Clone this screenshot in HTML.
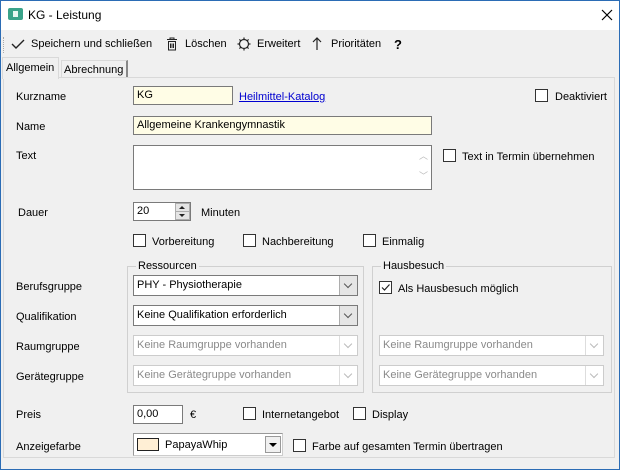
<!DOCTYPE html>
<html><head><meta charset="utf-8"><style>
*{box-sizing:border-box;margin:0;padding:0}
body{width:620px;height:470px;overflow:hidden;background:#f0f0f0;font-family:"Liberation Sans",sans-serif;font-size:11px;color:#000;position:relative}
.a{position:absolute;white-space:nowrap}
.t{line-height:15px}
.win{position:absolute;left:0;top:0;width:620px;height:470px;border:1px solid #2b6cb5}
.title{position:absolute;left:1px;top:1px;width:618px;height:29px;background:#fff}
.inp{position:absolute;border:1px solid #7a7a7a;background:#fff;padding:1px 0 0 3px;line-height:15px}
.y{background:#fffde6}
.cb{position:absolute;width:13px;height:13px;border:1px solid #333;background:#fff}
.cmb{position:absolute;border:1px solid #7a7a7a;background:#fff;height:21px;line-height:19px;padding-left:3px}
.cmb .b{position:absolute;right:0;top:0;width:18px;height:19px;border-left:1px solid #adadad;background:#e5e5e5}
.cmb .b:after{content:"";position:absolute;left:5px;top:5px;width:5px;height:5px;border-right:1px solid #555;border-bottom:1px solid #555;transform:rotate(45deg)}
.dis{border-color:#ccc;color:#8a8a8a;background:#fff}
.dis .b{background:#fff;border-left:1px solid #ddd}
.dis .b:after{border-color:#bbb}
.grp{position:absolute;border:1px solid #d0d0d0}
.grp span{position:absolute;top:-8px;left:8px;background:#f0f0f0;padding:0 2px;line-height:14px}
</style></head><body>
<div class="title"></div>
<div class="win"></div>
<div class="a" style="left:8px;top:8px;width:15px;height:12px;background:#3aa38a;border-radius:2px"><div style="position:absolute;left:5px;top:3px;width:5px;height:6px;background:#e8f7f2"></div></div>
<div class="a t" style="left:28px;top:8px;font-size:12px">KG - Leistung</div>
<svg class="a" style="left:601px;top:9px" width="12" height="12"><path d="M1 1L11 11M11 1L1 11" stroke="#000" stroke-width="1.2"/></svg>

<div class="a" style="left:3px;top:37px;height:16px;border-left:1px dotted #aaa"></div>
<svg class="a" style="left:11px;top:38px" width="14" height="12"><path d="M1 6 L5 10 L13 2" stroke="#222" stroke-width="1.4" fill="none"/></svg>
<div class="a t" style="left:31px;top:37px">Speichern und schließen</div>
<svg class="a" style="left:166px;top:37px" width="12" height="14"><path d="M1 2.5H11 M4 2.5V1H8V2.5 M2.5 4.5H9.5V13H2.5Z M4.5 6.5V11 M6 6.5V11 M7.5 6.5V11" stroke="#222" fill="none"/></svg>
<div class="a t" style="left:185px;top:37px">Löschen</div>
<svg class="a" style="left:237px;top:37px" width="14" height="14"><circle cx="7" cy="7" r="4.5" stroke="#222" fill="none" stroke-width="1.2"/><path d="M7 0.5V3 M7 11V13.5 M0.5 7H3 M11 7H13.5 M2.4 2.4L4 4 M10 10L11.6 11.6 M2.4 11.6L4 10 M10 4L11.6 2.4" stroke="#222" stroke-width="1.2"/></svg>
<div class="a t" style="left:257px;top:37px">Erweitert</div>
<svg class="a" style="left:312px;top:37px" width="10" height="14"><path d="M5 13V1 M1 5L5 1L9 5" stroke="#222" fill="none" stroke-width="1.2"/></svg>
<div class="a t" style="left:331px;top:37px">Prioritäten</div>
<div class="a t" style="left:394px;top:37px;font-weight:bold;font-size:13px">?</div>

<div class="a" style="left:3px;top:77px;width:612px;height:381px;border:1px solid #d9d9d9;background:#f0f0f0"></div>
<div class="a" style="left:2px;top:57px;width:57px;height:22px;border:1px solid #d9d9d9;border-bottom:none;background:#f0f0f0"></div>
<div class="a t" style="left:6px;top:61px">Allgemein</div>
<div class="a" style="left:61px;top:60px;width:67px;height:17px;border:1px solid #d9d9d9;border-bottom:none;border-right:2px solid #888"></div>
<div class="a t" style="left:64px;top:63px">Abrechnung</div>

<div class="a t" style="left:16px;top:90px">Kurzname</div>
<div class="inp y" style="left:133px;top:86px;width:100px;height:19px">KG</div>
<div class="a t" style="left:239px;top:90px;color:#0000d0;text-decoration:underline">Heilmittel-Katalog</div>
<div class="cb" style="left:535px;top:89px"></div>
<div class="a t" style="left:555px;top:90px">Deaktiviert</div>

<div class="a t" style="left:16px;top:120px">Name</div>
<div class="inp y" style="left:133px;top:116px;width:299px;height:19px">Allgemeine Krankengymnastik</div>

<div class="a t" style="left:16px;top:149px">Text</div>
<div class="inp" style="left:133px;top:145px;width:299px;height:45px"></div>
<div class="a" style="left:416px;top:146px;width:15px;height:43px;color:#bbb;font-size:9px;line-height:10px;text-align:center;padding-top:5px">︿<br><br>﹀</div>
<div class="cb" style="left:443px;top:149px"></div>
<div class="a t" style="left:462px;top:150px">Text in Termin übernehmen</div>

<div class="a t" style="left:18px;top:206px">Dauer</div>
<div class="inp" style="left:133px;top:202px;width:58px;height:19px">20</div>
<div class="a" style="left:175px;top:203px;width:15px;height:17px;background:#e5e5e5;border:1px solid #adadad"><div style="position:absolute;left:0;top:7px;width:13px;border-top:1px solid #adadad"></div><div style="position:absolute;left:3px;top:2px;border:3px solid transparent;border-bottom:3px solid #222;border-top:none"></div><div style="position:absolute;left:3px;top:10px;border:3px solid transparent;border-top:3px solid #222;border-bottom:none"></div></div>
<div class="a t" style="left:201px;top:206px">Minuten</div>

<div class="cb" style="left:133px;top:234px"></div><div class="a t" style="left:152px;top:235px">Vorbereitung</div>
<div class="cb" style="left:243px;top:234px"></div><div class="a t" style="left:262px;top:235px">Nachbereitung</div>
<div class="cb" style="left:363px;top:234px"></div><div class="a t" style="left:382px;top:235px">Einmalig</div>

<div class="grp" style="left:127px;top:266px;width:237px;height:127px"><span>Ressourcen</span></div>
<div class="grp" style="left:372px;top:266px;width:240px;height:127px"><span>Hausbesuch</span></div>

<div class="a t" style="left:16px;top:280px">Berufsgruppe</div>
<div class="a t" style="left:16px;top:310px">Qualifikation</div>
<div class="a t" style="left:16px;top:340px">Raumgruppe</div>
<div class="a t" style="left:16px;top:370px">Gerätegruppe</div>

<div class="cmb" style="left:133px;top:275px;width:225px">PHY - Physiotherapie<div class="b"></div></div>
<div class="cmb" style="left:133px;top:305px;width:225px">Keine Qualifikation erforderlich<div class="b"></div></div>
<div class="cmb dis" style="left:133px;top:335px;width:225px">Keine Raumgruppe vorhanden<div class="b"></div></div>
<div class="cmb dis" style="left:133px;top:365px;width:225px">Keine Gerätegruppe vorhanden<div class="b"></div></div>

<div class="cb" style="left:379px;top:281px"></div>
<svg class="a" style="left:380px;top:282px" width="11" height="11"><path d="M2 5.5L4.5 8L9.5 2.5" stroke="#222" stroke-width="1.2" fill="none"/></svg>
<div class="a t" style="left:398px;top:282px">Als Hausbesuch möglich</div>
<div class="cmb dis" style="left:379px;top:335px;width:225px">Keine Raumgruppe vorhanden<div class="b"></div></div>
<div class="cmb dis" style="left:379px;top:365px;width:225px">Keine Gerätegruppe vorhanden<div class="b"></div></div>

<div class="a t" style="left:16px;top:408px">Preis</div>
<div class="inp" style="left:133px;top:405px;width:50px;height:19px">0,00</div>
<div class="a t" style="left:190px;top:408px">€</div>
<div class="cb" style="left:243px;top:407px"></div><div class="a t" style="left:262px;top:408px">Internetangebot</div>
<div class="cb" style="left:353px;top:407px"></div><div class="a t" style="left:372px;top:408px">Display</div>

<div class="a t" style="left:16px;top:440px">Anzeigefarbe</div>
<div class="a" style="left:133px;top:433px;width:150px;height:23px;background:#fff;border:1px solid #ccc;border-top-color:#999;border-left-color:#999"></div>
<div class="a" style="left:137px;top:438px;width:22px;height:13px;background:#ffefd5;border:1px solid #222"></div>
<div class="a t" style="left:165px;top:438px">PapayaWhip</div>
<div class="a" style="left:265px;top:436px;width:16px;height:17px;background:#f0f0f0;border:1px solid #999"><div style="position:absolute;left:3px;top:6px;border:4px solid transparent;border-top:4px solid #000;border-bottom:none"></div></div>
<div class="cb" style="left:293px;top:439px"></div><div class="a t" style="left:312px;top:440px">Farbe auf gesamten Termin übertragen</div>
</body></html>
